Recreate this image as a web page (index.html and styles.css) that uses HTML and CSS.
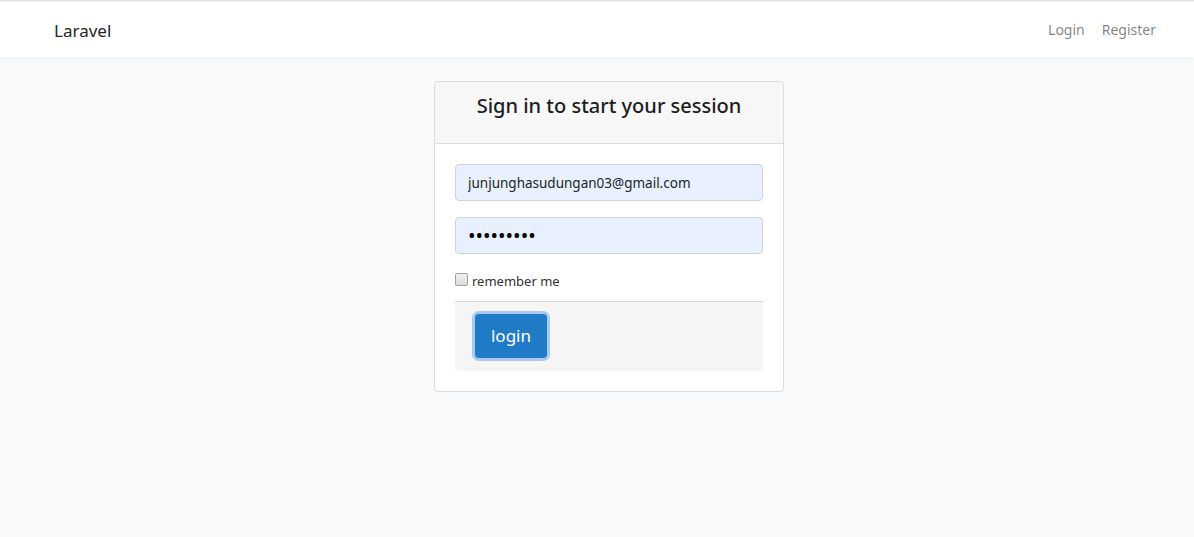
FILE: index.html
```html
<!DOCTYPE html>
<html>
<head>
<meta charset="utf-8">
<link rel="stylesheet" href="styles.css">
</head>
<body>
<div class="topline"></div>
<nav class="navbar">
  <a class="brand" href="#">Laravel</a>
  <div class="navlinks">
    <a href="#">Login</a>
    <a href="#">Register</a>
  </div>
</nav>
<main class="main">
  <div class="card">
    <div class="card-header">Sign in to start your session</div>
    <form class="card-body">
      <input class="field" type="email" value="junjunghasudungan03@gmail.com">
      <input class="field pw" type="password" value="123456789">
      <label class="remember"><span class="box"></span>remember me</label>
      <div class="footer">
        <button class="btn" type="button">login</button>
      </div>
    </form>
  </div>
</main>
</body>
</html>
```
FILE: styles.css
```css
* { box-sizing: border-box; }
html, body { margin: 0; padding: 0; }
body {
  background: #f8fafc;
  font-family: "Noto Sans", "Open Sans", sans-serif;
  color: #212529;
  height: 537px;
  overflow: hidden;
}
.topline { height: 2px; background: #e2e2e2; border-bottom: 1px solid #f0f0f0; }
.navbar {
  height: 55px;
  background: #fff;
  box-shadow: 0 2px 4px rgba(0,0,0,0.04);
  display: flex;
  align-items: center;
  justify-content: space-between;
  padding: 0 38px 0 54px;
  position: relative;
}
.brand {
  color: #212529;
  text-decoration: none;
  font-size: 17px;
  margin-top: 1px;
}
.navlinks { display: flex; gap: 17px; margin-top: -1px; }
.navlinks a {
  color: rgba(0,0,0,0.5);
  text-decoration: none;
  font-size: 14px;
}
.main { display: flex; justify-content: center; padding-top: 24px; padding-left: 24px; }
.card {
  width: 350px;
  background: #fff;
  border: 1px solid #dcdcdc;
  border-radius: 4px;
}
.card-header {
  height: 62px;
  background: #f7f7f7;
  border-bottom: 1px solid #dcdcdc;
  border-radius: 4px 4px 0 0;
  text-align: center;
  font-size: 20px;
  font-weight: 500;
  padding-top: 10px;
  color: #1d1d1f;
}
.card-body { padding: 20px 20px 20px 20px; display: flex; flex-direction: column; margin: 0; }
.field {
  height: 37px;
  width: 100%;
  background: #e8f0fe;
  border: 1px solid #ced4da;
  border-radius: 4px;
  padding: 0 12px;
  font-family: "Noto Sans", "Open Sans", sans-serif;
  font-size: 13.5px;
  color: #212529;
  margin-bottom: 16px;
}
.pw { font-size: 20px; color: #000; margin-bottom: 19px; }
.remember {
  display: flex;
  align-items: center;
  font-size: 13px;
  color: #333;
  height: 16px;
  margin-bottom: 12px;
}
.box {
  width: 13px;
  height: 13px;
  border: 1px solid #a0a0a0;
  border-radius: 2px;
  background: linear-gradient(#f0f0f0, #dcdcdc);
  margin-right: 4px;
  margin-top: -3px;
}
.footer {
  background: #f5f5f5;
  border-top: 1px solid #d6d6d6;
  border-radius: 0 0 4px 4px;
  height: 70px;
  padding: 12px 0 0 20px;
}
.btn {
  width: 72px;
  height: 44px;
  background: #1f7bc6;
  color: #fff;
  border: none;
  border-radius: 4px;
  font-family: "Noto Sans", "Open Sans", sans-serif;
  font-size: 17px;
  box-shadow: 0 0 0 3px #a6cbef;
  padding: 0 0 2px 0;
}
```
